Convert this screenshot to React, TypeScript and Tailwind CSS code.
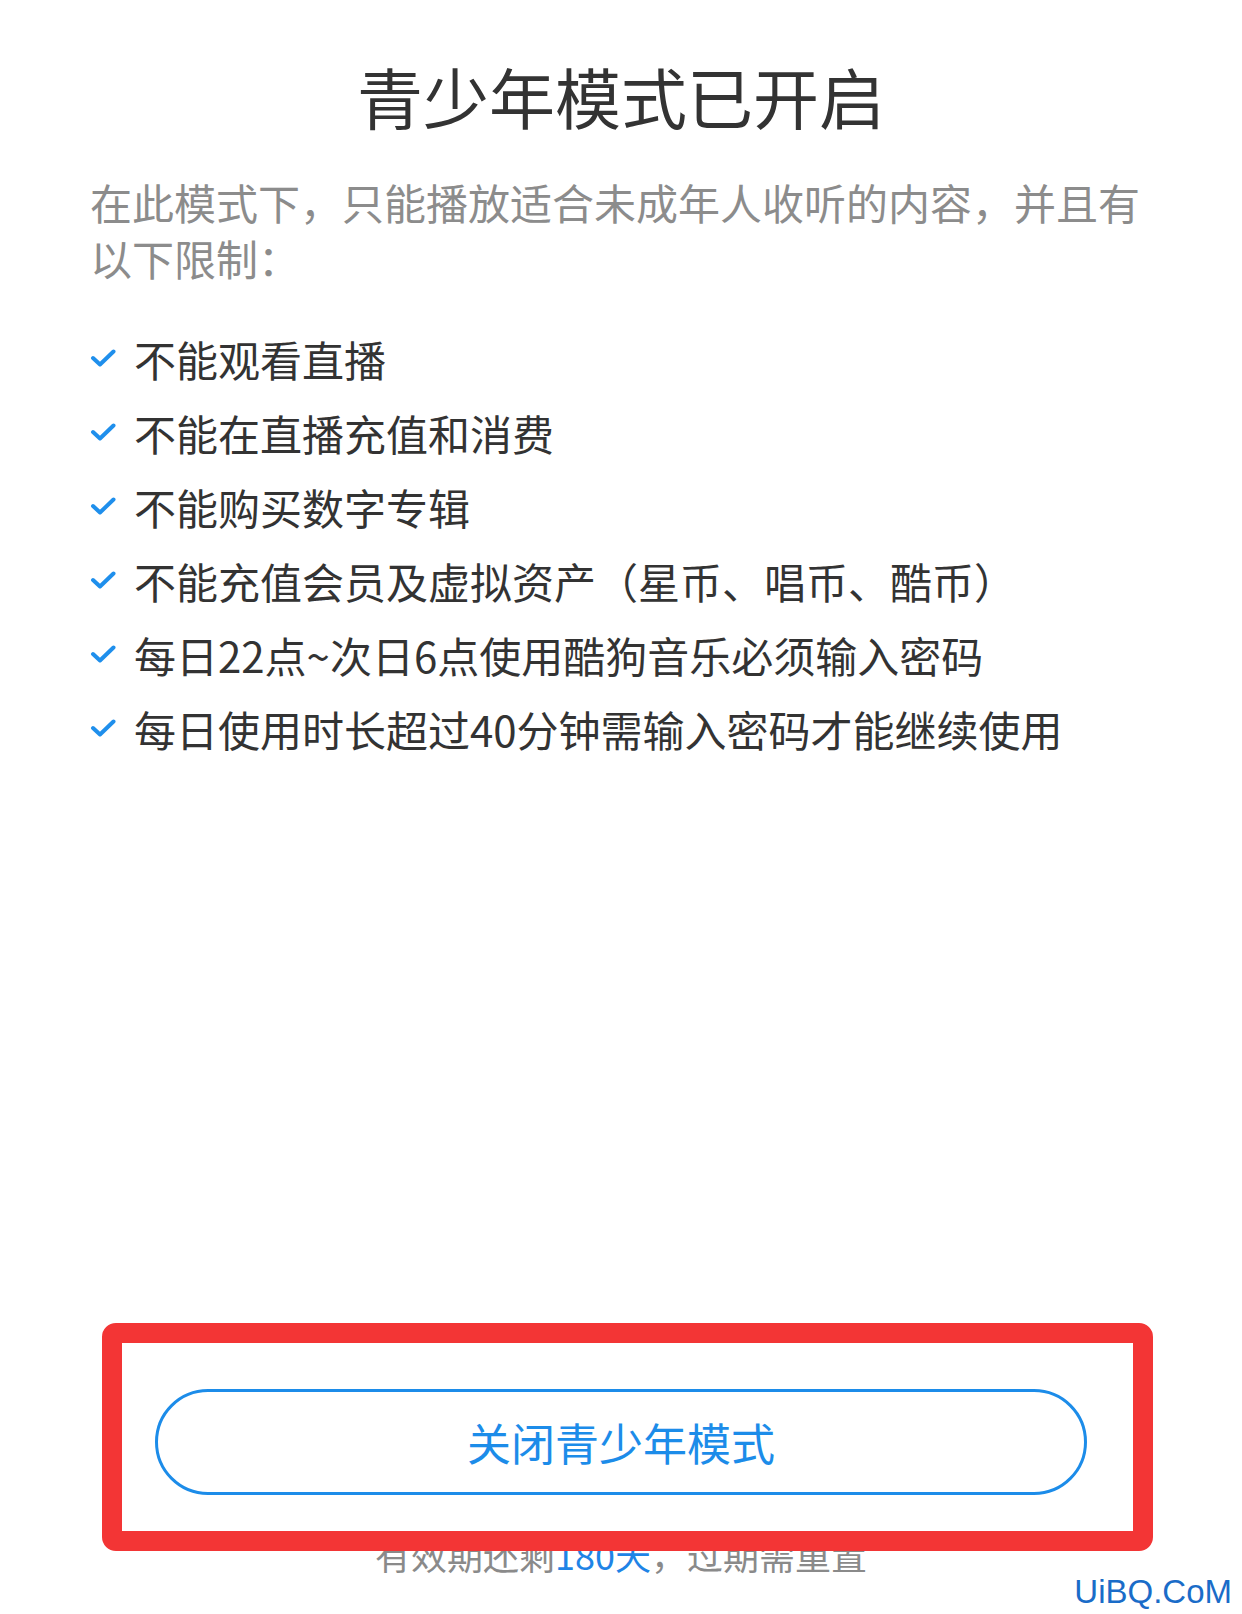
const limits = [
  "不能观看直播",
  "不能在直播充值和消费",
  "不能购买数字专辑",
  "不能充值会员及虚拟资产（星币、唱币、酷币）",
  "每日22点~次日6点使用酷狗音乐必须输入密码",
  "每日使用时长超过40分钟需输入密码才能继续使用",
];

const cjk = "font-['Noto_Sans_CJK_SC','Noto_Sans',sans-serif]";

const Check = () => (
  <svg width="26" height="18" viewBox="0 0 26 18" className="shrink-0">
    <path d="M3 9 L10 15.5 L23.5 2.5" fill="none" stroke="#1f8fec" strokeWidth="4" strokeLinecap="round" strokeLinejoin="round" />
  </svg>
);

const App = () => (
  <div className={`relative w-[1242px] h-[1614px] bg-white flex flex-col overflow-hidden ${cjk}`}>
    <h1 className="pt-[55px] text-center text-[66px] leading-[80px] text-[#333333] font-normal">青少年模式已开启</h1>

    <p className="mt-[39px] pl-[90px] pr-[40px] text-[42px] leading-[56px] text-[#8c8c8c] whitespace-nowrap">
      在此模式下，只能播放适合未成年人收听的内容，并且有
      <br />
      以下限制：
    </p>

    <ul className="mt-[35px] px-[90px]">
      {limits.map((t) => (
        <li key={t} className="flex items-center gap-[18px] h-[74px]">
          <Check />
          <span className="text-[42px] text-[#333333] whitespace-nowrap">{t}</span>
        </li>
      ))}
    </ul>

    <div className="flex-1" />

    <div className="px-[155px]">
      <button className="w-full h-[106px] rounded-full border-[3px] border-[#1c8ce9] text-[44px] text-[#1c8ce9] bg-white">
        关闭青少年模式
      </button>
    </div>

    <p className="mt-[37px] mb-[38px] text-center text-[36px] leading-[44px] text-[#8a8a8a]">
      有效期还剩<span className="text-[#1f84e6]">180天</span>，过期需重置
    </p>

    {/* red annotation frame over the button */}
    <div className="absolute left-[102px] top-[1323px] w-[1051px] h-[228px] border-[20px] border-[#f33535] rounded-[14px]" />

    {/* watermark */}
    <span className="absolute right-[10px] bottom-[6px] font-['Liberation_Sans',sans-serif] text-[33px] leading-none text-[#1a6cc8]">
      UiBQ.CoM
    </span>
  </div>
);

export default App;
